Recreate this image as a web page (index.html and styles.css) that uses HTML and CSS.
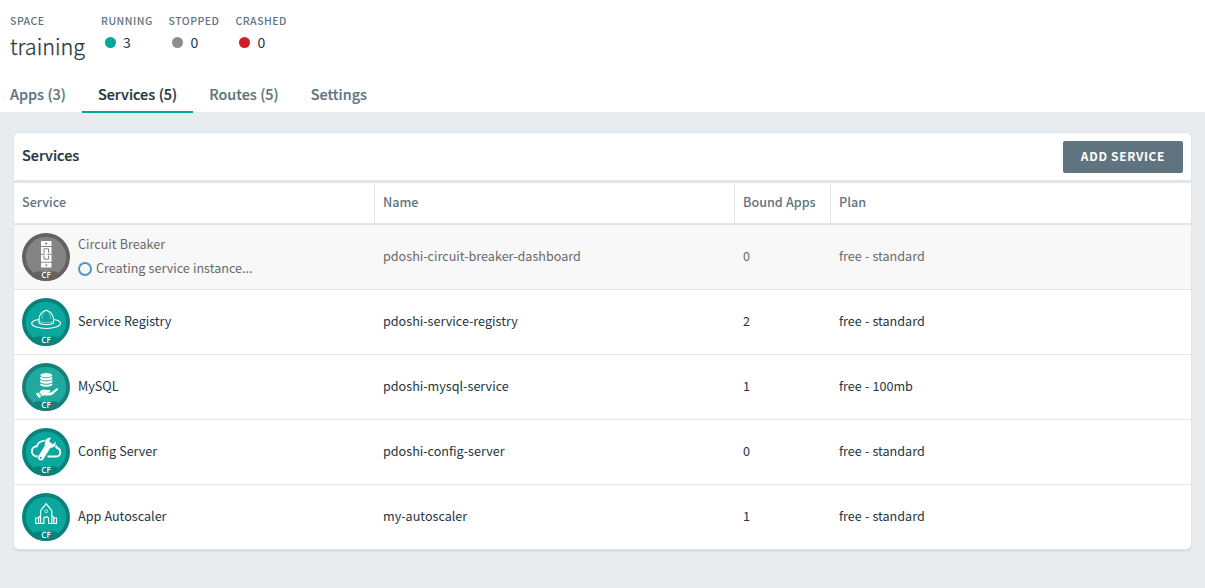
FILE: index.html
```html
<!DOCTYPE html>
<html lang="en">
<head>
<meta charset="utf-8">
<title>training - Services</title>
<link rel="stylesheet" href="styles.css">
</head>
<body>
<svg class="defs" width="0" height="0" aria-hidden="true">
  <defs>
    <clipPath id="disc"><circle cx="24" cy="24" r="24"/></clipPath>
    <g id="badge">
      <circle class="rim" cx="24" cy="24" r="24"/>
      <circle class="face" cx="24" cy="24" r="20.2"/>
      <path class="rim" clip-path="url(#disc)" d="M6 46 L11 40.500 Q14.500 37.600 18 38.300 Q24 40 30 38.300 Q33.500 37.600 37 40.500 L42 46 L24 50Z"/>
      <text class="cf" x="24" y="45.300" text-anchor="middle">CF</text>
    </g>
  </defs>
</svg>
<header class="header">
  <div class="summary">
    <div class="space"><div class="label">SPACE</div><h1 class="space-name">training</h1></div>
    <div class="stat running"><div class="label">RUNNING</div><div class="count"><i class="dot"></i>3</div></div>
    <div class="stat stopped"><div class="label">STOPPED</div><div class="count"><i class="dot"></i>0</div></div>
    <div class="stat crashed"><div class="label">CRASHED</div><div class="count"><i class="dot"></i>0</div></div>
  </div>
  <nav class="tabs">
    <a class="tab tab-first">Apps (3)</a>
    <a class="tab active">Services (5)</a>
    <a class="tab">Routes (5)</a>
    <a class="tab">Settings</a>
  </nav>
</header>
<main class="panel">
  <div class="panel-head"><h2 class="panel-title">Services</h2><button class="add">ADD SERVICE</button></div>
  <div class="row head"><div class="cell">Service</div><div class="cell">Name</div><div class="cell">Bound Apps</div><div class="cell">Plan</div></div>
  <div class="row pending">
    <div class="cell service">
      <svg class="icon" viewBox="0 0 48 48"><use href="#badge"/>
        <g fill="#fff"><rect x="19" y="8" width="10.500" height="5" rx=".6"/><rect x="19" y="14" width="10.500" height="14.800"/><rect x="19" y="29.800" width="10.500" height="4.700" rx=".6"/></g>
        <g fill="none" stroke="#848484"><path d="M22 20v-4.200h4.500V20M22 22.500v3.700h4.500v-3.700" stroke-width="1"/><path d="M19 21.300h4M25.500 21.300h4" stroke-width="1"/><path d="M24.300 9.200v2.600M23 10.500h2.600M24.300 31v2.400M23.100 32.200h2.400" stroke-width=".8"/></g>
      </svg>
      <div class="service-text"><div>Circuit Breaker</div><div class="progress"><i class="spinner"></i><span>Creating service instance...</span></div></div>
    </div>
    <div class="cell">pdoshi-circuit-breaker-dashboard</div><div class="cell">0</div><div class="cell">free - standard</div>
  </div>
  <div class="row">
    <div class="cell service">
      <svg class="icon" viewBox="0 0 48 48"><use href="#badge"/>
        <g fill="none" stroke="#fff" stroke-width="1.100" stroke-linecap="round"><path d="M17 21.800C12.500 21.800 9.700 23.600 9.700 25.300C9.700 28.500 17 30.500 24.300 30.500S38.500 28.500 38.500 25.300C38.500 23.600 36 21.800 31.500 21.800"/><path d="M17 25v-3.500C17 17 20 13.300 22.300 13.300C23 12.100 25.500 12.100 26.200 13.300C28.500 13.300 31.500 17 31.500 21.500V25C28 27.300 20.500 27.300 17 25Z"/><path d="M22.300 13.500Q19.900 16 19.900 20.500M26.200 13.500Q28.700 16 28.700 20.500M17.200 23.200Q24.200 26.300 31.300 23.200" opacity=".4"/></g>
      </svg>
      <div>Service Registry</div>
    </div>
    <div class="cell">pdoshi-service-registry</div><div class="cell">2</div><div class="cell">free - standard</div>
  </div>
  <div class="row mysql">
    <div class="cell service">
      <svg class="icon" viewBox="0 0 48 48"><use href="#badge"/>
        <g fill="#fff"><ellipse cx="24.300" cy="12.200" rx="6" ry="2.100"/><path d="M18.300 13.800Q24.300 16.600 30.300 13.800V16.200Q24.300 18.900 18.300 16.200ZM18.300 17.100Q24.300 19.900 30.300 17.100V19.500Q24.300 22.200 18.300 19.500ZM18.300 20.400Q24.300 23.200 30.300 20.400V22.200Q24.300 25.200 18.300 22.200Z"/><path d="M13.800 30.700L16.300 29.400L19.400 33.600L17 34.900ZM17.200 28.900Q21 25.700 24 27H27.800Q29.200 28 27.700 28.900L24.500 29.200L29.200 29.500L34.400 25.400Q36.600 25 35.900 26.800L30.600 31.500Q29 32.600 26 32.600H21.200L20 33Z"/></g>
      </svg>
      <div>MySQL</div>
    </div>
    <div class="cell">pdoshi-mysql-service</div><div class="cell">1</div><div class="cell">free - 100mb</div>
  </div>
  <div class="row">
    <div class="cell service">
      <svg class="icon" viewBox="0 0 48 48"><use href="#badge"/>
        <path d="M18.500 28.500H15C8 28 8.300 18.300 15 18.200C16.500 12 25.800 11 28.800 16.200C33.100 15.800 34.300 18.200 34.500 19.500C40.200 21.500 39 28.500 34 28.500H25.500" fill="none" stroke="#fff" stroke-width="1.900"/>
        <path d="M29.600 9.500L27.400 13.300L31 16.200L33.700 13.200C35 16.900 32.300 20.200 28.600 20.200L21.700 31.300C19.500 34.800 14 31.500 16 28L22.700 17.300C21.400 12.600 24.800 8.300 29.600 9.500Z" fill="#fff" stroke="#09a79d" stroke-width=".8"/><circle cx="18.800" cy="29.800" r="1" fill="#09a79d"/>
      </svg>
      <div>Config Server</div>
    </div>
    <div class="cell">pdoshi-config-server</div><div class="cell">0</div><div class="cell">free - standard</div>
  </div>
  <div class="row">
    <div class="cell service">
      <svg class="icon" viewBox="0 0 48 48"><use href="#badge"/>
        <g fill="none" stroke="#fff" stroke-width="1.200"><path d="M18.600 30.500V17.700L24.100 10.800L29.800 17.700V30.500H26.600V25.200Q24.200 22.600 21.800 25.200V30.500Z"/><path d="M18.600 22.600L16.600 24.600V30.500H18.600M16.600 25H13.700V30.500H16.600M29.800 22.600L31.800 24.600V30.500H29.800M31.800 25H34.500V30.500H31.800"/><circle cx="24.200" cy="18.200" r="1.500" stroke-width=".7"/></g>
      </svg>
      <div>App Autoscaler</div>
    </div>
    <div class="cell">my-autoscaler</div><div class="cell">1</div><div class="cell">free - standard</div>
  </div>
</main>
</body>
</html>
```
FILE: styles.css
```css
* { box-sizing: border-box; }
body {
  margin: 0;
  min-height: 588px;
  background: #e8ecef;
  color: #243640;
  font: 12.600px/20px "Noto Sans CJK SC", "Noto Sans", sans-serif;
  word-spacing: .3px;
}
h1, h2 { margin: 0; font-weight: 400; }
.defs { display: block; height: 0; }
.header { height: 112px; background: #fff; }
.summary { display: flex; height: 77px; padding: 12px 10px 0; }
.label { color: #5f747f; font-size: 10.500px; font-weight: 500; line-height: 18px; letter-spacing: .5px; white-space: nowrap; }
.space { width: 91px; }
.space-name { font-size: 21.600px; font-weight: 300; line-height: 31px; -webkit-text-stroke: .25px currentColor; }
.stat { width: 67px; }
.stopped, .crashed { padding-left: .5px; }
.count { display: flex; align-items: center; gap: 7.500px; padding: 1px 0 0 3.500px; font-size: 14px; line-height: 22px; }
.dot { width: 11px; height: 11px; border-radius: 50%; background: #00a79d; }
.stopped .dot { background: #8c8f8f; }
.crashed .dot { background: #ce1e28; }
.tabs { display: flex; height: 36px; }
.tab { height: 36px; padding: 0 16px; color: #5f747f; font-size: 14.400px; font-weight: 500; line-height: 33px; white-space: nowrap; -webkit-text-stroke: .2px currentColor; }
.tab-first { padding-left: 10px; }
.tab.active { color: #243640; border-bottom: 2px solid #00a79d; }
.panel { margin: 21px 14px 0; height: 416px; border-radius: 5px; overflow: hidden; background: #fff; box-shadow: 0 0 0 1px #dfe5e8, 0 2px 2px #ccd2d5; }
.panel-head { display: flex; justify-content: space-between; height: 50px; padding: 8px 8px 0; border-bottom: 3px solid #dfe5e8; }
.panel-title { font-size: 14.400px; font-weight: 500; line-height: 28px; -webkit-text-stroke: .2px currentColor; }
.add { width: 120px; height: 32px; padding: 0 0 2px; border: 0; border-radius: 2px; background: #5f747f; color: #fff; font: 700 12px/30px "Noto Sans CJK SC", sans-serif; letter-spacing: .65px; }
.row { display: grid; grid-template-columns: 361px 360px 96px 1fr; height: 65px; border-bottom: 1px solid #dfe5e8; }
.row:last-child { height: 64px; border-bottom: 0; }
.cell { display: flex; align-items: center; padding: 0 0 2px 8px; white-space: nowrap; }
.row.head { height: 42px; color: #5f747f; font-weight: 500; border-bottom: 2px solid #dfe5e8; }
.head .cell { border-right: 1px solid #dfe5e8; }
.head .cell:last-child { border-right: 0; }
.cell.service { gap: 8px; padding-bottom: 0; }
.service > div { padding-bottom: 2px; }
.icon { width: 48px; height: 48px; flex: none; --rim: #08827a; --face: #09a79d; }
.mysql .icon { --rim: #167f78; --face: #20a99e; }
.pending .icon { --rim: #626262; --face: #848484; }
.rim { fill: var(--rim); }
.face { fill: var(--face); }
.cf { fill: #fff; font: 600 8px "Open Sans", sans-serif; }
.pending { background: #f8f8f8; color: #686868; }
.service-text { line-height: 24px; }
.progress { display: flex; align-items: center; gap: 4px; }
.spinner { width: 14px; height: 14px; margin-top: 2px; border: 2px solid #4f97c9; border-radius: 50%; }
```
